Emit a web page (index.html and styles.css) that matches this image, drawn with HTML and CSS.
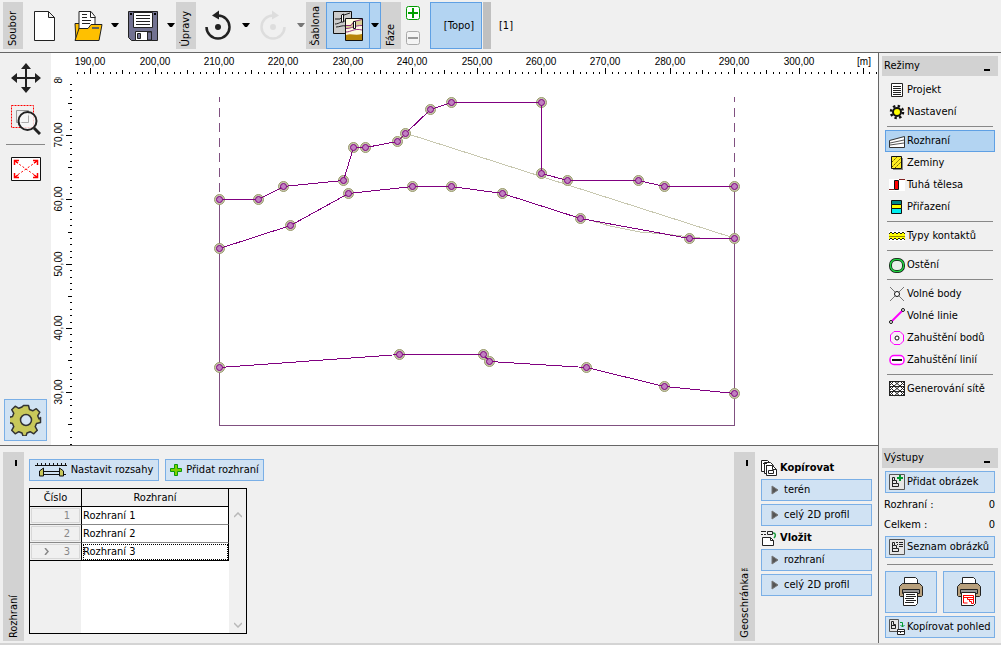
FILE: index.html
```html
<!DOCTYPE html>
<html lang="cs">
<head>
<meta charset="utf-8">
<title>Rozhraní</title>
<link rel="stylesheet" href="styles.css">
</head>
<body>
<div class="app">
  <header class="toolbar">
    <div class="tab tab-tool"><span>Soubor</span></div>
    <button class="tool tool-new" aria-label="Nový"><svg width="24" height="32"><path class="ink paper" d="M1.500 1.500h14l6 6v23h-20zM15.500 1.500v6h6"/></svg></button>
    <button class="tool tool-open" aria-label="Otevřít"><svg width="30" height="32"><path class="gold ink" d="M2 13.500h8v17h-7z"/><path class="paper ink" d="M6 21v-19.500h12l4 5v15z"/><path class="ink none" d="M17.500 1.500v6h5M9 4.500h5M9 7.500h5M9 10.500h9M9 13.500h8"/><path class="gold ink" d="M2 30.500l4-12h9l3-4h11l-3 16z"/><path d="M19 17h7v2h-7z" fill="#665"/></svg></button>
    <button class="drop" aria-label="Otevřít poslední"><svg width="8" height="5"><path d="M0 0h8L5 4H3z"/></svg></button>
    <button class="tool tool-save" aria-label="Uložit"><svg width="32" height="32"><path class="ink" fill="#727291" d="M1.500 1.500h29v29h-26l-3-3z"/><path class="paper ink" d="M6.500 2.500h19v15h-19z"/><path class="ink none" d="M9 5.500h14M9 8.500h14M9 11.500h14M9 14.500h14"/><path d="M3 3h2v2H3zM27 3h2v2h-2z"/><path class="paper ink" d="M8.500 21.500h16v9h-16z"/><path class="ink" fill="#727291" d="M10.500 23.500h3v5h-3zM20.500 22h4v8h-4z"/></svg></button>
    <button class="drop" aria-label="Možnosti uložení"><svg width="8" height="5"><path d="M0 0h8L5 4H3z"/></svg></button>
    <div class="tab tab-tool"><span>Úpravy</span></div>
    <button class="tool tool-turn" aria-label="Zpět"><svg width="28" height="32"><path d="M2.500 17a11.500 11.500 0 1 0 11.500-11.500" fill="none" stroke="#222" stroke-width="2.500"/><path d="M8 5.500l7-5v9z" fill="#222"/><circle cx="14" cy="17" r="3" fill="#222"/></svg></button>
    <button class="drop" aria-label="Kroky zpět"><svg width="8" height="5"><path d="M0 0h8L5 4H3z"/></svg></button>
    <button class="tool tool-turn" aria-label="Znovu" disabled><svg width="28" height="32"><path d="M25.500 17a11.500 11.500 0 1 1-11.500-11.500" fill="none" stroke="#ddd" stroke-width="2.500"/><path d="M20 5.500l-7-5v9z" fill="#ddd"/><circle cx="14" cy="17" r="3" fill="#ddd"/></svg></button>
    <button class="drop drop-off" aria-label="Kroky vpřed"><svg width="8" height="5"><path d="M0 0h8L5 4H3z"/></svg></button>
    <div class="tab tab-tool"><span>Šablona</span></div>
    <button class="on template" aria-label="Šablona"><svg width="30" height="30"><path d="M.5.500h18v22H.5z" fill="#ccc" stroke="#111"/><path d="M2 8h5l4-4 6-2M2 13c5 0 6-4 15-3M3 16c4 0 6-2 10-1" fill="none" stroke="#222"/><path d="M8.500 4v7h2V3z" fill="#fff" stroke="#111"/><path d="M12.500 7.500h17v22h-17z" fill="#fffbe0" stroke="#111"/><path d="M13 14h4l4-4 8-2v6c-8 0-9 4-16 3z" fill="#d9cf95"/><path d="M13 24c5-2 9 1 16-1v6H13z" fill="#b8860b"/><path d="M13 21c5 0 8-4 16-2M13 14.500h5l3-4 8-2M13 17.500c6 0 8-3 16-3" fill="none" stroke="#903080"/><path d="M20.500 10.500h2v7h-2z" fill="#fff" stroke="#111"/></svg></button>
    <button class="on template-drop" aria-label="Vybrat šablonu"><svg width="8" height="5"><path d="M0 0h8L5 4H3z"/></svg></button>
    <div class="tab tab-tool"><span>Fáze</span></div>
    <div class="stages">
      <button aria-label="Přidat fázi"><svg width="14" height="14"><rect x=".5" y=".5" width="13" height="13" rx="2" fill="#fff" stroke="#009a00"/><path d="M7 2v10M2 7h10" stroke="#00a000" stroke-width="2"/></svg></button>
      <button aria-label="Odebrat fázi"><svg width="14" height="14"><rect x=".5" y=".5" width="13" height="13" rx="2" fill="#f4f4f4" stroke="#aaa"/><path d="M2 7h10" stroke="#999" stroke-width="2"/></svg></button>
    </div>
    <button class="on stage">[Topo]</button>
    <div class="grip"></div>
    <button class="stage-next">[1]</button>
  </header>

  <div class="body">
    <div class="main">
      <div class="upper">
        <nav class="lefttools">
          <button aria-label="Posun"><svg width="30" height="30"><path d="M15 3v24M3 15h24" stroke="#222" stroke-width="2"/><path d="M15 0l5 6H10zM15 30l5-6H10zM0 15l6-5v10zM30 15l-6-5v10z" fill="#222"/></svg></button>
          <button aria-label="Přiblížit"><svg width="30" height="30"><path d="M.5.500h22v22H.5z" fill="none" stroke="red" stroke-dasharray="2 1"/><path d="M5.500 5.500h12v12h-12z" fill="none" stroke="#999"/><circle cx="16.500" cy="16" r="9" fill="#f7f7f7" fill-opacity=".8" stroke="#222" stroke-width="2"/><path d="M10.500 17.500h7v-7" fill="none" stroke="#aaa"/><path d="M23 23l6 6" stroke="#222" stroke-width="3"/></svg></button>
          <hr>
          <button aria-label="Vše"><svg width="30" height="24"><path d="M.5.500h29v23H.5z" fill="#fff" stroke="#111"/><path d="M5 5l20 14M25 5L5 19" stroke="red" stroke-dasharray="2 2"/><path d="M3.500 8V3.500H8M22 3.500h4.500V8M3.500 16v4.500H8M26.500 16v4.500H22M4 4l3 2M26 4l-3 2M4 20l3-2M26 20l-3-2" fill="none" stroke="red" stroke-width="1.500"/></svg></button>
          <button class="gear" aria-label="Nastavení zobrazení"><svg width="32" height="32" viewBox="-16 -16 32 32"><path d="M-2.500-14.500h5l1 4 3.200 1.300 3.600-2.100 3.500 3.500-2.100 3.600L13-1l1.500-1.500v5l-4 1-1.300 3.200 2.100 3.600-3.500 3.500-3.600-2.100-3.200 1.300-1 3h-3l-1-3-3.200-1.300-3.600 2.100-3.500-3.500 2.100-3.600-1.300-3.200-4-1v-5l4-1 1.300-3.200-2.100-3.600 3.500-3.500 3.600 2.100 3.200-1.300z" fill="#c8c85a" stroke="#333" stroke-width="1.500" stroke-linejoin="round"/><circle r="5.500" fill="#d4e4f4" stroke="#333" stroke-width="1.500"/></svg></button>
        </nav>
        <div class="canvas">
          <svg id="scene" viewBox="51 53 827 392" preserveAspectRatio="xMinYMin meet" role="img" aria-label="Řez terénem">
            <defs><clipPath id="ruler-clip"><path d="M51 77h24v368H51z"/></clipPath></defs>
            <g id="ruler-x" class="ruler"></g>
            <g class="ruler" clip-path="url(#ruler-clip)" id="ruler-y"></g>
            <text class="ruler" x="864" y="65">[m]</text>
            <path class="edge" d="M219.500 199v226.500h515V186"/>
            <path class="edge limit" d="M219.500 97v102M734.500 97v89"/>
            <path class="ghost" d="M405 133L734 238M586 219l24 7 30 6 24 2 36 4"/>
            <g id="layers"></g>
          </svg>
        </div>
      </div>
      <section class="lower">
        <div class="tab tab-panel"><button class="pin" aria-label="Skrýt Rozhraní"></button><span>Rozhraní</span></div>
        <div class="interfaces">
          <div class="actions">
            <button class="btn ranges"><svg width="32" height="16"><path d="M0 3.500h32M2.500 1v2M6.500 1v2M10.500 1v2M14.500 1v2M18.500 1v2M22.500 1v2M26.500 1v2M30.500 1v2M4 12.500h4M9 9.500h15M9 12.500h15M25 12.500h6" stroke="#111"/><path d="M4.500 9l4-3v8h-4zM24.500 6l4 3v5h-4z" fill="#c8c85a" stroke="#111"/></svg>Nastavit rozsahy</button>
            <button class="btn add"><svg width="12" height="12"><path d="M4.500.500h3v4h4v3h-4v4h-3v-4h-4v-3h4z" fill="#7fd000" stroke="#0a9a0a"/></svg>Přidat rozhraní</button>
          </div>
          <div class="grid">
            <table>
              <thead><tr><th class="num">Číslo</th><th>Rozhraní</th></tr></thead>
              <tbody>
                <tr><td class="num"><span>1</span></td><td>Rozhraní 1</td></tr>
                <tr><td class="num"><span>2</span></td><td>Rozhraní 2</td></tr>
                <tr class="current"><td class="num"><span><svg width="6" height="7"><path d="M1 0l3 3.500L1 7" fill="none" stroke="#888" stroke-width="1.500"/></svg>3</span></td><td>Rozhraní 3</td></tr>
              </tbody>
            </table>
            <div class="scroll">
              <svg width="8" height="6"><path d="M0 5l4-4 4 4" fill="none" stroke="#b8b8b8" stroke-width="1.500"/></svg>
              <svg width="8" height="6"><path d="M0 1l4 4 4-4" fill="none" stroke="#b8b8b8" stroke-width="1.500"/></svg>
            </div>
          </div>
        </div>
        <div class="tab tab-panel"><button class="pin" aria-label="Skrýt Geoschránku"></button><span>Geoschránka™</span></div>
        <div class="clipboard">
          <h2><svg width="16" height="16"><path class="ink paper" d="M.5.500h6l3 3v8h-9z"/><path class="ink paper" d="M3.500 2.500h6l3 3v8h-9z"/><path class="ink paper" d="M5.500 5.500h6l4 4v6h-10z"/><path class="ink none" d="M11.500 5.500v4h4M7.500 10.500h5v3h-5zM2 3.500h4M5 5.500h3"/></svg>Kopírovat</h2>
          <button class="btn"><svg width="8" height="10"><path d="M1 1l6 4-6 4z" fill="#555" stroke="#777"/></svg>terén</button>
          <button class="btn"><svg width="8" height="10"><path d="M1 1l6 4-6 4z" fill="#555" stroke="#777"/></svg>celý 2D profil</button>
          <h2><svg width="16" height="16"><path class="ink none" d="M0 1.500h5M0 4.500h2M3 4.500h2M6.500 1.500h5v3h-5z"/><path class="ink paper" d="M1.500 7.500h8l3 3v5h-11z"/><path class="ink none" d="M9.500 7.500v3h3"/><path d="M12 3c3 0 3 3 1 5" fill="none" stroke="#1a9a3a" stroke-width="1.500"/></svg>Vložit</h2>
          <button class="btn"><svg width="8" height="10"><path d="M1 1l6 4-6 4z" fill="#555" stroke="#777"/></svg>rozhraní</button>
          <button class="btn"><svg width="8" height="10"><path d="M1 1l6 4-6 4z" fill="#555" stroke="#777"/></svg>celý 2D profil</button>
        </div>
      </section>
    </div>

    <aside class="side">
      <section class="modes">
        <h3>Režimy<button class="min" aria-label="Sbalit Režimy"></button></h3>
        <button class="mode"><svg width="16" height="16"><path class="ink paper" d="M2.500 1.500h11v13h-11z"/><path class="ink none" d="M4 4.500h8M4 6.500h8M4 8.500h8M4 10.500h8M4 12.500h8"/></svg>Projekt</button>
        <button class="mode"><svg width="16" height="16"><circle cx="8" cy="8" r="6" fill="none" stroke="#111" stroke-width="2.500" stroke-dasharray="2.350 2.350"/><circle cx="8" cy="8" r="4" fill="#ff0" stroke="#111" stroke-width="2"/></svg>Nastavení</button>
        <hr>
        <button class="mode mode-on"><svg width="16" height="16"><path d="M.5 7.500l15-4v11H.5z" fill="#fff" stroke="#333"/><path d="M1 10l14-3M1 12l14-2" stroke="#555"/></svg>Rozhraní</button>
        <button class="mode"><svg width="16" height="16"><path d="M4 3h10v12H4z" fill="#888"/><path d="M2.500 1.500h10v12h-10z" fill="#ffee20" stroke="#111"/><path d="M3 7l5-5M3 12l9-9M6 13l6-6" stroke="#665500" stroke-dasharray="2 1"/></svg>Zeminy</button>
        <button class="mode"><svg width="16" height="16"><path d="M0 2h16v12H0z" fill="#fff"/><path d="M0 12.500h5M10 2.500h6" stroke="#802020"/><path d="M5.500 3.500h4v9h-4z" fill="red" stroke="#111"/></svg>Tuhá tělesa</button>
        <button class="mode"><svg width="16" height="16"><path d="M2.500 1.500h10v4h-10z" fill="#008888" stroke="#111"/><path d="M2.500 5.500h10v4h-10z" fill="#ff0" stroke="#111"/><path d="M2.500 9.500h10v5h-10z" fill="#00eeee" stroke="#111"/></svg>Přiřazení</button>
        <hr>
        <button class="mode"><svg width="16" height="16"><path d="M0 4h16v8H0z" fill="#ff0"/><path d="M0 3h16v2H0zM0 11h16v2H0z" fill="#fff"/><path d="M0 6l2-2 2 2 2-2 2 2 2-2 2 2 2-2 2 2M0 12l2-2 2 2 2-2 2 2 2-2 2 2 2-2 2 2" fill="none" stroke="#221"/><path d="M0 8.500h16" stroke="#998800"/></svg>Typy kontaktů</button>
        <hr>
        <button class="mode"><svg width="16" height="16"><rect x="1.500" y="2.500" width="13" height="12" rx="5.500" fill="#e8f0e8" stroke="#111" stroke-width="3"/><rect x="1.500" y="2.500" width="13" height="12" rx="5.500" fill="none" stroke="#20d040" stroke-width="1.500"/></svg>Ostění</button>
        <hr>
        <button class="mode"><svg width="16" height="16"><path d="M1 1l14 14M15 1L1 15" stroke="#777"/><circle cx="8" cy="8" r="2.500" fill="#fff" stroke="#111"/></svg>Volné body</button>
        <button class="mode"><svg width="16" height="16"><path d="M3 13L13 3" stroke="#f0f" stroke-width="2"/><circle cx="2" cy="14" r="1.500" fill="#fff" stroke="#111"/><circle cx="14" cy="2" r="1.500" fill="#fff" stroke="#111"/></svg>Volné linie</button>
        <button class="mode"><svg width="16" height="16"><path d="M5 1.500h6l3.500 3.500v6L11 14.500H5L1.500 11V5z" fill="#f8eef8" stroke="#f0f"/><circle cx="8" cy="8" r="2" fill="#fff" stroke="#111"/></svg>Zahuštění bodů</button>
        <button class="mode"><svg width="16" height="16"><rect x="1" y="3.500" width="14" height="9" rx="4" fill="#fff" stroke="#f0f" stroke-width="1.500"/><path d="M3 8h10" stroke="#111" stroke-width="2"/></svg>Zahuštění linií</button>
        <hr>
        <button class="mode"><svg width="16" height="16"><path class="ink paper" d="M.5.500h15v14H.5z"/><path class="ink none" d="M0 5.500h16M0 10.500h16M0 5l5-5 6 5 5-5M0 0l5 5 6-5 5 5M0 10l5-5 6 5 5-5M0 5l5 5 6-5 5 5M0 15l5-5 6 5 5-5M0 10l5 5 6-5 5 5"/></svg>Generování sítě</button>
      </section>
      <section class="outputs">
        <h3>Výstupy<button class="min" aria-label="Sbalit Výstupy"></button></h3>
        <button class="btn out"><svg width="16" height="16"><path d="M.5.500h15v15H.5z" fill="#e6e6e6" stroke="#555"/><path class="ink none" d="M3.500 13V3.500h2v3h2v3h2v3h-6M3.500 6.500h2M3.500 9.500h4"/><path d="M11 1v6M8 4h6" stroke="#009a30" stroke-width="2"/></svg>Přidat obrázek</button>
        <dl><div><dt>Rozhraní :</dt><dd>0</dd></div><div><dt>Celkem :</dt><dd>0</dd></div></dl>
        <button class="btn out"><svg width="16" height="16"><path d="M.5.500h15v15H.5z" fill="#e6e6e6" stroke="#555"/><path class="ink none" d="M3.500 13V3.500h2v3h2v3h2v3h-6M3.500 6.500h2M3.500 9.500h4"/><path d="M7 3.500h2M10 3.500h4M8 5.500h1M10 5.500h4M10 7.500h4" stroke="#222"/></svg>Seznam obrázků</button>
        <hr>
        <div class="prints">
          <button class="btn" aria-label="Tisk protokolu"><svg width="24" height="30"><path class="ink paper" d="M5.500 8V.5h11l2 2V8z"/><path class="ink" fill="#b8a07c" d="M3.500 6.500h17l3 3v9l-1 1h-21l-1-1v-9z"/><path class="ink" fill="#999" d="M3.500 12.500h17v4h-17z"/><path class="ink paper" d="M4.500 15.500h14v11l-2 2h-12z"/><path class="ink none" d="M7 17.500h9M7 19.500h10M6 21.500h9M7 23.500h10M6 25.500h9"/></svg></button>
          <button class="btn" aria-label="Tisk obrázku"><svg width="24" height="30"><path class="ink paper" d="M5.500 8V.5h11l2 2V8z"/><path class="ink" fill="#b8a07c" d="M3.500 6.500h17l3 3v9l-1 1h-21l-1-1v-9z"/><path class="ink" fill="#999" d="M3.500 12.500h17v4h-17z"/><path class="ink paper" d="M4.500 15.500h14v11l-2 2h-12z"/><path d="M6.500 18.500h10v8h-2v-2h-2v-2h-2v-2h-4zM10 20.500h6M12 22.500h4M6.500 18v8h4" fill="none" stroke="red"/></svg></button>
        </div>
        <button class="btn out"><svg width="16" height="16"><path d="M.5.500h9v12h-9z" fill="#e6e6e6" stroke="#555"/><path class="ink none" d="M2.500 10V2.500h2v3h2v4h-4M2.500 6.500h4"/><path d="M11 3.500h2.500V8M11.500 6l2 2 2-2" fill="none" stroke="#009a30"/><path class="ink paper" d="M8.500 10.500h7v5h-7zM8 12.500h8M11.500 12v2"/></svg>Kopírovat pohled</button>
      </section>
    </aside>
  </div>
</div>
<script src="script.js"></script>
</body>
</html>
```
FILE: styles.css
```css
* { box-sizing: border-box; }
body { margin: 0; background: #f0f0f0; color: #000; font: 11px/14px Tahoma, "DejaVu Sans Condensed", "Noto Sans", sans-serif; }
button { margin: 0; padding: 0; border: 0; background: none; color: inherit; font: inherit; display: flex; align-items: center; justify-content: center; white-space: nowrap; }
svg { display: block; flex: none; }
hr { border: 0; border-top: 1px solid #888; margin: 3px 5px; width: auto; }
.ink { stroke: #222; }
.none { fill: none; }
.paper { fill: #fff; }
.gold { fill: #ffc000; }

.app { height: 100vh; display: flex; flex-direction: column; border-bottom: 2px solid #d4d4d4; }
.toolbar { height: 53px; flex: none; display: flex; align-items: stretch; padding: 2px 3px 3px; border-bottom: 1px solid #666; }
.tab { background: #d2d2d2; display: flex; flex-direction: column; align-items: center; flex: none; }
.tab span { writing-mode: vertical-rl; transform: rotate(180deg); margin-top: auto; line-height: 16px; white-space: nowrap; }
.tab-tool { width: 20px; padding-bottom: 3px; }
.tool-new, .tool-open { width: 43px; }
.tool-save { width: 45px; }
.tool-turn { width: 44px; }
.drop { width: 11px; }
.drop-off { fill: #777; }
.on { background: #b3d4f2; border: 1px solid #5fa0e4; }
.template { width: 44px; }
.template-drop { width: 12px; margin-left: -1px; }
.stages { width: 29px; display: flex; flex-direction: column; align-items: center; justify-content: space-between; padding: 4px 5px 4px 0; }
.stage { width: 52px; padding-left: 6px; }
.grip { width: 8px; margin-left: 1px; background: #c0c0c0; }
.stage-next { padding: 0 8px; }

.body { flex: 1; display: flex; min-height: 0; }
.main { flex: 1; display: flex; flex-direction: column; min-width: 0; }
.upper { flex: 1; display: flex; min-height: 0; border-bottom: 1px solid #666; }
.lefttools { width: 51px; flex: none; display: flex; flex-direction: column; align-items: center; padding: 10px 0 4px; }
.lefttools button + button { margin-top: 12px; }
.lefttools hr { width: 39px; margin: 9px 0 12px; }
.lefttools .gear { width: 43px; height: 42px; margin-top: auto; background: #d0e2f3; border: 1px solid #7aafe6; }
.canvas { flex: 1; background: #fff; min-width: 0; }
.canvas svg { width: 100%; height: 100%; }

.ruler { font: 10px "Liberation Sans Narrow", "Liberation Sans", Arial, sans-serif; text-anchor: middle; }
.tick { stroke: #000; shape-rendering: crispEdges; }
.edge { fill: none; stroke: #805080; shape-rendering: crispEdges; }
.limit { stroke-dasharray: 9 6; stroke-dashoffset: 4; }
.ghost { fill: none; stroke: #c8c8b0; shape-rendering: crispEdges; }
.layer { fill: none; stroke: #800080; shape-rendering: crispEdges; }
.halo { fill: #c8c8b0; stroke: #99996a; }
.node { fill: #c080c0; stroke: #800080; }

.lower { flex: none; height: 197px; display: flex; padding: 6px 6px 2px 3px; }
.tab-panel { width: 21px; padding: 8px 0 3px; }
.pin { width: 2px; height: 6px; background: #000; margin-left: 4px; }
.btn { background: #d0e2f3; border: 1px solid #7aafe6; height: 22px; }
.interfaces { flex: 1; display: flex; flex-direction: column; gap: 7px; padding: 7px 5px; }
.actions { display: flex; gap: 6px; }
.ranges { width: 130px; gap: 4px; }
.add { width: 99px; gap: 4px; }
.grid { width: 218px; height: 146px; display: flex; border: 1px solid #000; background: linear-gradient(to right, #f0f0f0 51px, #fff 51px); }
table { width: 199px; border-collapse: separate; border-spacing: 0; table-layout: fixed; align-self: flex-start; }
th { height: 18px; padding: 0; font-weight: normal; background: #f0f0f0; border-right: 1px solid #000; border-bottom: 1px solid #000; }
td { height: 18px; padding: 0 1px; border-right: 1px solid #000; border-bottom: 1px solid #888; background: #fff; }
.num { width: 52px; background: #f0f0f0; }
td.num { padding: 1px; color: #888; }
td.num span { display: flex; justify-content: flex-end; align-items: center; gap: 14px; height: 15px; padding-right: 9px; border: 1px solid #d8d8d8; }
.current td { border-bottom-color: #000; }
.current td:last-child { outline: 1px dotted #000; outline-offset: -2px; }
.scroll { flex: 1; background: #f0f0f0; display: flex; flex-direction: column; align-items: center; justify-content: space-between; padding: 23px 0 5px; }
.clipboard { width: 117px; padding: 7px 0 0 6px; display: flex; flex-direction: column; gap: 3px; }
.clipboard h2 { font: inherit; font-weight: bold; display: flex; align-items: center; gap: 3px; height: 17px; margin: 0; }
.clipboard .btn { justify-content: flex-start; padding-left: 9px; gap: 5px; }

.side { width: 123px; flex: none; border-left: 1px solid #666; padding: 3px; display: flex; flex-direction: column; justify-content: space-between; }
.side h3 { font: inherit; height: 20px; margin: 0 0 3px; padding: 0 8px 0 2px; background: #d2d2d2; display: flex; justify-content: space-between; align-items: center; }
.min { width: 6px; height: 2px; background: #000; margin-top: 8px; }
.mode { width: 110px; height: 22px; margin-left: 3px; padding-left: 3px; border: 1px solid transparent; gap: 2px; justify-content: flex-start; }
.mode-on { background: #b3d4f2; border-color: #5fa0e4; }
.outputs { display: flex; flex-direction: column; padding-bottom: 2px; }
.out { margin: 0 3px; padding-left: 3px; gap: 2px; justify-content: flex-start; }
dl { margin: 2px 3px 1px 2px; }
dl div { display: flex; justify-content: space-between; line-height: 20px; }
dd { margin: 0; }
.outputs hr { margin: 6px 5px; }
.prints { display: flex; gap: 6px; margin: 0 3px 3px; }
.prints .btn { flex: 1; height: 42px; }
```
FILE: script.js
```js
const NS = 'http://www.w3.org/2000/svg';
const UNIT = 6.44;
const toX = m => Math.round(219 + (m - 210) * UNIT);
const toY = m => Math.round(199.4 + (60 - m) * 6.43);

function add(parent, tag, attrs, text) {
  const el = document.createElementNS(NS, tag);
  for (const key in attrs) el.setAttribute(key, attrs[key]);
  if (text) el.textContent = text;
  parent.appendChild(el);
}
const tickLength = m => (m % 10 === 0 ? 6 : m % 5 === 0 ? 4 : 2);

const rulerX = document.getElementById('ruler-x');
for (let m = 188; m <= 312; m++) {
  const x = toX(m);
  add(rulerX, 'path', { class: 'tick', d: `M${x + 0.5} 74v${-tickLength(m)}` });
  if (m % 10 === 0 && m < 310) add(rulerX, 'text', { x, y: 65 }, `${m},00`);
}
const rulerY = document.getElementById('ruler-y');
for (let m = 22; m <= 80; m++) {
  const y = toY(m);
  if (m < 79) add(rulerY, 'path', { class: 'tick', d: `M72 ${y + 0.5}h${-tickLength(m)}` });
  if (m % 10 === 0) add(rulerY, 'text', { transform: `translate(62 ${y}) rotate(-90)` }, `${m},00`);
}

const layers = [
  [[219, 199], [258, 199], [283, 186], [343, 180], [353, 147], [365, 147], [397, 141], [405, 133], [430, 109], [451, 102], [541, 102], [541, 173], [567, 180], [638, 180], [664, 186], [734, 186]],
  [[219, 248], [290, 225], [348, 193], [412, 186], [451, 186], [502, 193], [580, 218], [689, 238], [734, 238]],
  [[219, 367], [399, 354], [483, 354], [489, 361], [586, 367], [664, 386], [734, 393]]
];
const group = document.getElementById('layers');
const nodes = layers.flat();
nodes.forEach(([x, y]) => add(group, 'circle', { class: 'halo', cx: x + 0.5, cy: y + 0.5, r: 5 }));
layers.forEach(points => add(group, 'polyline', { class: 'layer', points: points.map(([x, y]) => `${x + 0.5},${y + 0.5}`).join(' ') }));
nodes.forEach(([x, y]) => add(group, 'circle', { class: 'node', cx: x + 0.5, cy: y + 0.5, r: 3 }));
```
